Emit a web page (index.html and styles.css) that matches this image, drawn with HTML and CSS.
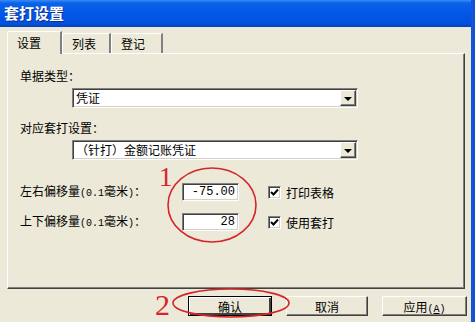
FILE: index.html
```html
<!DOCTYPE html>
<html lang="zh-CN">
<head>
    <meta charset="UTF-8">
    <title>套打设置</title>
    <link rel="stylesheet" href="styles.css">
</head>
<body>
    <div class="window">
        <div class="titlebar"><span class="title">套打设置</span></div>
        <div class="client">
            <div class="tabs">
                <div class="tab active">设置</div>
                <div class="tab">列表</div>
                <div class="tab">登记</div>
            </div>
            <div class="panel">
                <div class="field-label">单据类型：</div>
                <div class="combo">
                    <span class="combo-text">凭证</span>
                    <span class="combo-btn"><span class="arrow"></span></span>
                </div>
                <div class="field-label second">对应套打设置：</div>
                <div class="combo">
                    <span class="combo-text">（针打）金额记账凭证</span>
                    <span class="combo-btn"><span class="arrow"></span></span>
                </div>
                <div class="offsets">
                    <span class="offset-label">左右偏移量<span class="ascii">(0.1</span>毫米<span class="ascii">)</span>：</span>
                    <span class="num-input">-75.00</span>
                    <span class="check">
                        <span class="box"><svg width="9" height="9" viewBox="0 0 9 9"><path d="M1 4 L3.5 6.5 L8 1.5" fill="none" stroke="#000" stroke-width="2"/></svg></span>
                        打印表格
                    </span>
                    <span class="offset-label">上下偏移量<span class="ascii">(0.1</span>毫米<span class="ascii">)</span>：</span>
                    <span class="num-input">28</span>
                    <span class="check">
                        <span class="box"><svg width="9" height="9" viewBox="0 0 9 9"><path d="M1 4 L3.5 6.5 L8 1.5" fill="none" stroke="#000" stroke-width="2"/></svg></span>
                        使用套打
                    </span>
                </div>
            </div>
            <div class="actions">
                <button class="btn default ok">确认</button>
                <button class="btn cancel">取消</button>
                <button class="btn apply">应用<span class="ascii">(<u>A</u>)</span></button>
            </div>
        </div>
        <!-- red hand-drawn marks on the screenshot -->
        <svg class="marks" width="475" height="322" viewBox="0 0 475 322">
            <text x="159" y="186" class="mark-num">1</text>
            <ellipse cx="212" cy="205" rx="44" ry="37" fill="none" stroke="#d5252a" stroke-width="1.6"/>
            <text x="155" y="315" class="mark-num big">2</text>
            <ellipse cx="231" cy="303" rx="58" ry="14" fill="none" stroke="#d5252a" stroke-width="1.6"/>
        </svg>
    </div>
</body>
</html>
```

FILE: styles.css
```css
body {
    margin: 0;
    background-color: #ece9d8;
    font-family: 'Noto Sans CJK SC', 'DejaVu Sans', sans-serif;
    font-size: 12px;
    color: #000;
}
.window {
    position: relative;
    width: 475px;
    height: 322px;
    box-sizing: border-box;
    border-right: 4px solid #1553d6;
    background-color: #ece9d8;
    overflow: hidden;
}
.titlebar {
    height: 27px;
    margin-right: -4px;
    padding-left: 4px;
    background: linear-gradient(to bottom, #3b8cf3 0, #0a62ea 3px, #0457e6 14px, #0350dc 24px, #0341b8 27px);
}
.title {
    color: #fff;
    font-weight: bold;
    font-size: 15px;
    line-height: 26px;
    letter-spacing: 0;
    text-shadow: 1px 1px 0 #0a2f8a;
}
.client {
    padding: 4px 4px 0 7px;
}
.tabs {
    display: flex;
    align-items: flex-end;
    height: 22px;
}
.tab {
    height: 20px;
    line-height: 19px;
    box-sizing: border-box;
    padding: 0 9px;
    border-top: 1px solid #fff;
    border-left: 1px solid #fff;
    border-right: 2px solid #808080;
    border-top-left-radius: 2px;
    background-color: #ece9d8;
}
.tab.active {
    position: relative;
    z-index: 1;
    height: 23px;
    margin-bottom: -1px;
    width: 55px;
    padding-left: 9px;
    line-height: 21px;
}
.tab:nth-child(2) { width: 49px; }
.tab:nth-child(3) { width: 52px; }
.panel {
    width: 458px;
    height: 236px;
    box-sizing: border-box;
    padding: 14px 0 0 12px;
    border-top: 1px solid #fff;
    border-left: 1px solid #fff;
    border-right: 1px solid #404040;
    border-bottom: 1px solid #404040;
    box-shadow: inset -1px -1px 0 #808080;
}
.field-label {
    height: 16px;
    line-height: 16px;
}
.field-label.second {
    margin-top: 12px;
}
.combo {
    display: flex;
    width: 286px;
    height: 20px;
    box-sizing: border-box;
    margin: 4px 0 0 52px;
    background: #fff;
    border: 1px solid;
    border-color: #808080 #fff #fff #808080;
    box-shadow: inset 1px 1px 0 #404040, inset -1px -1px 0 #d4d0c8;
}
.combo-text {
    flex: 1;
    padding-left: 3px;
    line-height: 18px;
}
.combo-btn {
    display: flex;
    align-items: center;
    justify-content: center;
    width: 16px;
    height: 16px;
    margin: 1px 1px 0 0;
    box-sizing: border-box;
    background: #ece9d8;
    border: 1px solid;
    border-color: #fff #404040 #404040 #fff;
    box-shadow: inset -1px -1px 0 #808080;
}
.arrow {
    width: 0;
    height: 0;
    border-left: 4px solid transparent;
    border-right: 4px solid transparent;
    border-top: 4px solid #000;
    margin-top: 1px;
}
.offsets {
    display: grid;
    grid-template-columns: 162px 57px auto;
    grid-auto-rows: 18px;
    row-gap: 12px;
    align-items: center;
    margin-top: 23px;
}
.offset-label {
    line-height: 16px;
}
.ascii {
    font-family: 'Liberation Mono', monospace;
    font-size: 10px;
}
.num-input {
    height: 18px;
    box-sizing: border-box;
    padding-right: 3px;
    background: #fff;
    border: 1px solid;
    border-color: #808080 #fff #fff #808080;
    box-shadow: inset 1px 1px 0 #404040, inset -1px -1px 0 #d4d0c8;
    text-align: right;
    font-family: 'Liberation Mono', monospace;
    font-size: 12px;
    line-height: 16px;
}
.check {
    display: flex;
    align-items: center;
    gap: 5px;
    margin-left: 29px;
}
.box {
    display: flex;
    align-items: center;
    justify-content: center;
    width: 13px;
    height: 13px;
    box-sizing: border-box;
    background: #fff;
    border: 1px solid;
    border-color: #808080 #fff #fff #808080;
    box-shadow: inset 1px 1px 0 #404040, inset -1px -1px 0 #d4d0c8;
}
.actions {
    display: flex;
    justify-content: flex-end;
    gap: 14px;
    margin-top: 7px;
}
.btn {
    height: 20px;
    padding: 0;
    box-sizing: border-box;
    background-color: #ece9d8;
    font-family: inherit;
    font-size: 12px;
    color: #000;
    border: 1px solid;
    border-color: #fff #404040 #404040 #fff;
    box-shadow: inset -1px -1px 0 #808080;
}
.btn.default {
    border: 1px solid #000;
    box-shadow: inset 1px 1px 0 #fff, inset -2px -2px 0 #404040;
}
.ok { width: 84px; }
.cancel { width: 82px; }
.apply { width: 85px; }
.marks {
    position: absolute;
    left: 0;
    top: 0;
    pointer-events: none;
}
.mark-num {
    font-family: 'Liberation Serif', serif;
    font-size: 27px;
    fill: #d5252a;
}
.mark-num.big {
    font-size: 30px;
}
```
